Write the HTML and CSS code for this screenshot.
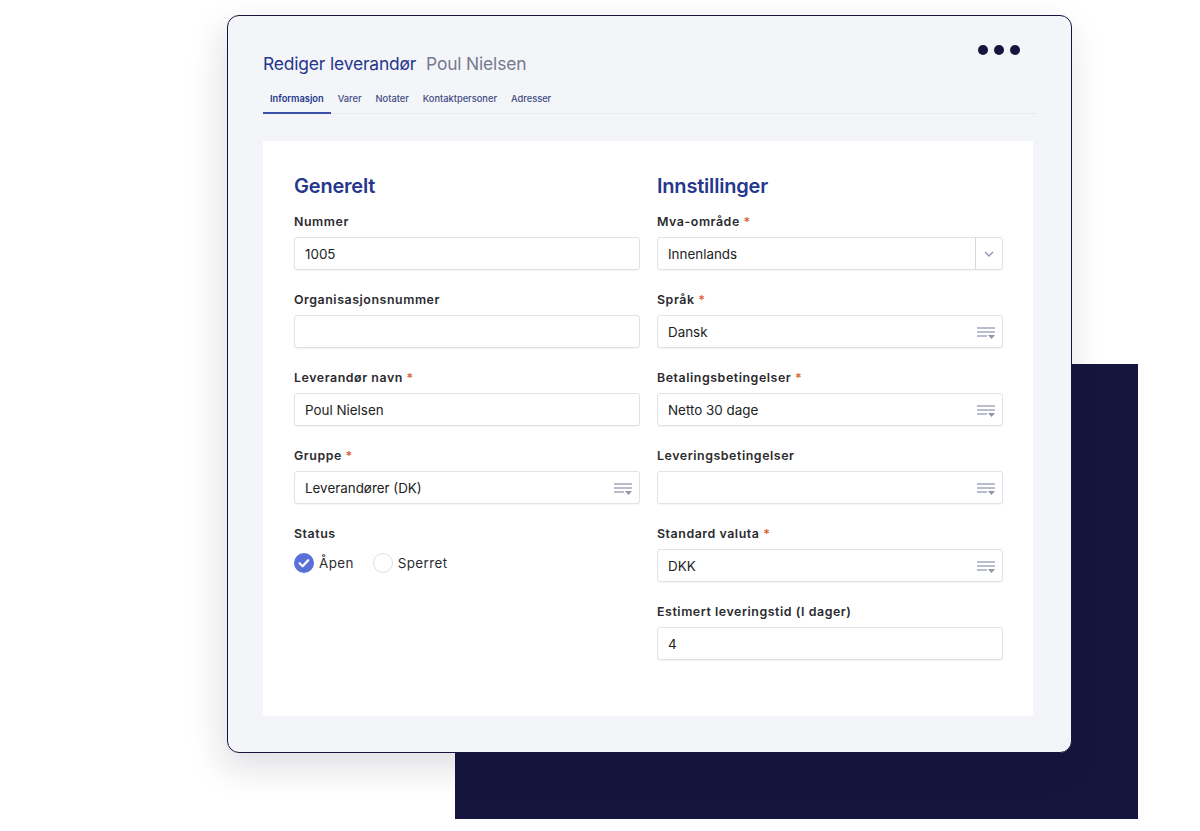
FILE: index.html
```html
<!DOCTYPE html>
<html lang="no">
<head>
<meta charset="utf-8">
<title>Rediger leverandør</title>
<link rel="stylesheet" href="styles.css">
</head>
<body>
<div class="stage">
  <div class="backdrop"></div>
  <div class="window">
    <div class="dots"><span></span><span></span><span></span></div>
    <h1 class="title">Rediger leverandør <span class="sub">Poul Nielsen</span></h1>
    <nav class="tabs">
      <a class="tab active">Informasjon</a>
      <a class="tab">Varer</a>
      <a class="tab">Notater</a>
      <a class="tab">Kontaktpersoner</a>
      <a class="tab">Adresser</a>
    </nav>
    <div class="card">
      <div class="col">
        <h2 class="section">Generelt</h2>
        <div class="field">
          <label class="label">Nummer</label>
          <div class="input">1005</div>
        </div>
        <div class="field">
          <label class="label">Organisasjonsnummer</label>
          <div class="input"></div>
        </div>
        <div class="field">
          <label class="label">Leverandør navn <span class="req">*</span></label>
          <div class="input">Poul Nielsen</div>
        </div>
        <div class="field">
          <label class="label">Gruppe <span class="req">*</span></label>
          <div class="input lookup">Leverandører (DK)
            <svg class="lk" viewBox="0 0 18 12" width="18" height="12"><path d="M0 1h18M0 5h18M0 9h10" stroke="#a3a8bd" stroke-width="1.3"/><path d="M11 8h7l-3.5 4z" fill="#8f95ad"/></svg>
          </div>
        </div>
        <div class="field">
          <label class="label">Status</label>
          <div class="radios">
            <span class="radio checked"><svg viewBox="0 0 20 20" width="20" height="20"><circle cx="10" cy="10" r="10" fill="#5b6fd9"/><path d="M5.6 10.3l3 2.9 5.6-6" fill="none" stroke="#fff" stroke-width="2.2" stroke-linecap="round" stroke-linejoin="round"/></svg>Åpen</span>
            <span class="radio"><span class="circle"></span>Sperret</span>
          </div>
        </div>
      </div>
      <div class="col">
        <h2 class="section">Innstillinger</h2>
        <div class="field">
          <label class="label">Mva-område <span class="req">*</span></label>
          <div class="input dropdown">Innenlands
            <span class="chev"><svg viewBox="0 0 10 6" width="10" height="6"><path d="M1 1l4 4 4-4" fill="none" stroke="#8f95ad" stroke-width="1.4"/></svg></span>
          </div>
        </div>
        <div class="field">
          <label class="label">Språk <span class="req">*</span></label>
          <div class="input lookup">Dansk
            <svg class="lk" viewBox="0 0 18 12" width="18" height="12"><path d="M0 1h18M0 5h18M0 9h10" stroke="#a3a8bd" stroke-width="1.3"/><path d="M11 8h7l-3.5 4z" fill="#8f95ad"/></svg>
          </div>
        </div>
        <div class="field">
          <label class="label">Betalingsbetingelser <span class="req">*</span></label>
          <div class="input lookup">Netto 30 dage
            <svg class="lk" viewBox="0 0 18 12" width="18" height="12"><path d="M0 1h18M0 5h18M0 9h10" stroke="#a3a8bd" stroke-width="1.3"/><path d="M11 8h7l-3.5 4z" fill="#8f95ad"/></svg>
          </div>
        </div>
        <div class="field">
          <label class="label">Leveringsbetingelser</label>
          <div class="input lookup">
            <svg class="lk" viewBox="0 0 18 12" width="18" height="12"><path d="M0 1h18M0 5h18M0 9h10" stroke="#a3a8bd" stroke-width="1.3"/><path d="M11 8h7l-3.5 4z" fill="#8f95ad"/></svg>
          </div>
        </div>
        <div class="field">
          <label class="label">Standard valuta <span class="req">*</span></label>
          <div class="input lookup">DKK
            <svg class="lk" viewBox="0 0 18 12" width="18" height="12"><path d="M0 1h18M0 5h18M0 9h10" stroke="#a3a8bd" stroke-width="1.3"/><path d="M11 8h7l-3.5 4z" fill="#8f95ad"/></svg>
          </div>
        </div>
        <div class="field">
          <label class="label">Estimert leveringstid (I dager)</label>
          <div class="input">4</div>
        </div>
      </div>
    </div>
  </div>
</div>
</body>
</html>
```

FILE: styles.css
```css
* { box-sizing: border-box; }
html, body { margin: 0; padding: 0; background: #fff; }
body {
  width: 1200px;
  height: 831px;
  overflow: hidden;
  font-family: Inter, "Noto Sans", "Liberation Sans", sans-serif;
  color: #222;
}
.stage {
  position: relative;
  width: 1200px;
  height: 831px;
  padding-top: 15px;
  padding-left: 227px;
}
.backdrop {
  position: absolute;
  left: 455px;
  top: 364px;
  width: 683px;
  height: 455px;
  background: #16153d;
}
.window {
  position: relative;
  z-index: 1;
  width: 845px;
  height: 738px;
  background: #f4f5f9;
  border: 1.5px solid #16153d;
  border-radius: 12px;
  box-shadow: -4px 14px 36px rgba(20, 20, 50, 0.14);
  padding: 36px 37px 0 35px;
}
.dots {
  position: absolute;
  top: 29px;
  right: 51px;
  display: flex;
  gap: 6px;
}
.dots span {
  width: 10px;
  height: 10px;
  border-radius: 50%;
  background: #16153d;
}
.title {
  margin: 0;
  font-size: 17.4px;
  line-height: 24px;
  font-weight: 400;
  color: #25378c;
  letter-spacing: -0.15px;
}
.title .sub {
  color: #747b8e;
  margin-left: 5px;
}
.tabs {
  display: flex;
  margin-top: 11px;
  width: 774px;
  border-bottom: 1px solid #e8eaf0;
}
.tab {
  padding: 5px 7px 6px;
  font-size: 9.3px;
  font-weight: 500;
  line-height: 14px;
  color: #3f4b82;
  border-bottom: 2px solid transparent;
  margin-bottom: -1px;
}
.tab.active {
  border-bottom-color: #3d4fa8;
  color: #25378c;
  font-weight: 600;
}
.card {
  margin-top: 27px;
  width: 770px;
  height: 575px;
  background: #fff;
  padding: 33px 30px 0 31px;
  display: grid;
  grid-template-columns: 346px 346px;
  column-gap: 17px;
  align-content: start;
}
.section {
  margin: 0 0 16px;
  font-size: 20px;
  line-height: 24px;
  font-weight: 600;
  color: #25378c;
  letter-spacing: -0.2px;
}
.field {
  display: flex;
  flex-direction: column;
  margin-bottom: 22px;
}
.label {
  font-size: 12.4px;
  line-height: 16px;
  font-weight: 600;
  letter-spacing: 0.55px;
  color: #2b2b2f;
  margin-bottom: 7px;
}
.req {
  color: #d9623b;
}
.input {
  position: relative;
  height: 33px;
  border: 1px solid #e0e2e8;
  border-radius: 3px;
  box-shadow: 0 1px 1px rgba(0, 0, 0, 0.04);
  background: #fff;
  padding: 0 10px;
  display: flex;
  align-items: center;
  font-size: 13.4px;
  color: #222;
}
.lk {
  position: absolute;
  right: 7px;
  top: 11px;
}
.dropdown .chev {
  position: absolute;
  right: 0;
  top: 0;
  bottom: 0;
  width: 27px;
  border-left: 1px solid #d5d8e0;
  display: flex;
  align-items: center;
  justify-content: center;
}
.radios {
  display: flex;
  align-items: center;
  gap: 19px;
  margin-top: 4px;
}
.radio {
  display: flex;
  align-items: center;
  gap: 5px;
  font-size: 13.4px;
  letter-spacing: 0.4px;
  color: #2b2b2f;
}
.radio svg { display: block; }
.circle {
  width: 20px;
  height: 20px;
  border-radius: 50%;
  border: 1px solid #dcdee5;
  background: #fff;
}
```
